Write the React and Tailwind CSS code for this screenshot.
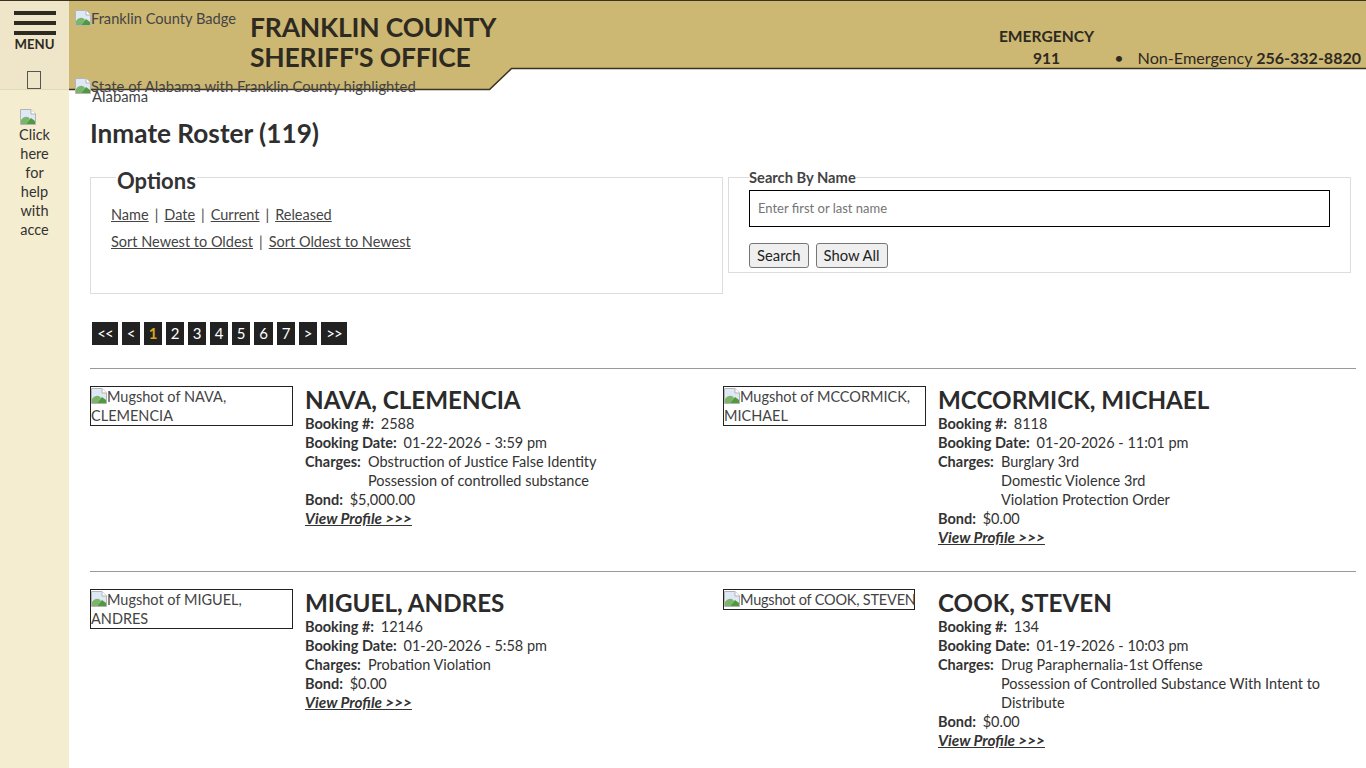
// Inmate Roster page
import { Fragment } from 'react'

const INMATES = [
  [
    { name: 'NAVA, CLEMENCIA', booking: '2588', date: '01-22-2026 - 3:59 pm', charges: ['Obstruction of Justice False Identity', 'Possession of controlled substance'], bond: '$5,000.00' },
    { name: 'MCCORMICK, MICHAEL', booking: '8118', date: '01-20-2026 - 11:01 pm', charges: ['Burglary 3rd', 'Domestic Violence 3rd', 'Violation Protection Order'], bond: '$0.00' },
  ],
  [
    { name: 'MIGUEL, ANDRES', booking: '12146', date: '01-20-2026 - 5:58 pm', charges: ['Probation Violation'], bond: '$0.00' },
    { name: 'COOK, STEVEN', booking: '134', date: '01-19-2026 - 10:03 pm', charges: ['Drug Paraphernalia-1st Offense', 'Possession of Controlled Substance With Intent to', 'Distribute'], bond: '$0.00', shortBox: true },
  ],
]

const PAGES = ['<<', '<', '1', '2', '3', '4', '5', '6', '7', '>', '>>']

function BrokenImage() {
  return (
    <svg width="16" height="16" viewBox="0 0 16 16" className="inline-block align-[-2px] shrink-0">
      <path d="M0.5 0.5H11L15.5 5V15.5H0.5Z" fill="#dfe8f5" stroke="#b4b4b4" />
      <path d="M11 0.5V5H15.5" fill="#fff" stroke="#b4b4b4" />
      <path d="M1 11C4 7 8 7 10 10L6 15H1Z" fill="#7cb469" />
      <path d="M6 15L11 9L15 12V15Z" fill="#4f9a3d" />
    </svg>
  )
}

function Header() {
  return (
    <header className="relative h-[90px] font-['Lato','Noto_Sans',sans-serif] text-[#2e2a22]">
      <svg className="absolute left-0 top-0 w-full h-[91px]" viewBox="0 0 1297 91" preserveAspectRatio="none">
        <path d="M0 0H1297V68.5H443L421 90H0Z" fill="#ccb773" />
        <path d="M0 0.5H1297" stroke="#3a3222" />
        <path d="M0 89.5H420.5L442.5 68.5H1297" stroke="#3a3222" strokeWidth="1.5" fill="none" />
      </svg>
      <div className="relative flex h-[68px] pl-[6px]">
        <div className="pt-[9px] w-[175px] text-[14.65px] leading-[19px] whitespace-nowrap text-[#444]">
          <BrokenImage />Franklin County Badge
        </div>
        <h2 className="pt-[12px] text-[26.5px] leading-[30px] font-bold whitespace-nowrap tracking-[-0.2px]">
          FRANKLIN COUNTY<br />SHERIFF'S OFFICE
        </h2>
        <div className="ml-auto flex items-end pr-[5px] -mb-[1px] text-[16.2px] leading-[22px] whitespace-nowrap">
          <div className="font-bold text-center text-[15.6px]">EMERGENCY<br />911</div>
          <span className="ml-[20px] mr-[14px]">•</span>
          <div>Non-Emergency <b className="text-[16px]">256-332-8820</b></div>
        </div>
      </div>
      <div className="absolute left-[6px] top-[77px] text-[14.85px] leading-[19px] whitespace-nowrap text-[#444]">
        <BrokenImage />State of Alabama with Franklin County highlighted
        <div className="pl-[17px] -mt-[9px]">Alabama</div>
      </div>
    </header>
  )
}

function Sidebar() {
  return (
    <aside className="w-[69px] shrink-0 bg-[#f5edcf] font-['Lato','Noto_Sans',sans-serif] text-[#333]">
      <div className="h-[90px] bg-[#efe6c9] border-b border-[#e3d9b8] border-t border-t-[#3a3222] flex flex-col items-center pt-[10px]">
        <div className="w-[42px] flex flex-col gap-[6px]">
          <div className="h-[4px] bg-[#2e2a22]" />
          <div className="h-[4px] bg-[#2e2a22]" />
          <div className="h-[4px] bg-[#2e2a22]" />
        </div>
        <div className="mt-[1px] text-[13.2px] leading-[17px] font-bold text-[#2e2a22]">MENU</div>
        <div className="mt-[18px] mr-[1px] w-[14px] h-[18px] shrink-0 border border-[#555]" />
      </div>
      <div className="mt-[18px] ml-[19px] w-[31px] overflow-hidden text-[14.5px] leading-[19px] text-center">
        <div className="text-left pl-[1px] h-[16px] mb-[1px]"><BrokenImage /></div>
        <div className="whitespace-nowrap">Click</div>
        <div>here</div>
        <div>for</div>
        <div>help</div>
        <div>with</div>
        <div className="whitespace-nowrap">acce</div>
      </div>
    </aside>
  )
}

function Options() {
  return (
    <div className="flex items-start gap-[5px] pr-[5px] text-[14.5px] leading-[19px] text-[#444]">
      <fieldset className="w-[633px] h-[131px] border border-[#ddd] px-[20px] pt-[14px]">
        <legend className="ml-[5px] px-[1px] text-[22px] leading-[28px] font-bold text-[#333]">
          <span className="block translate-y-[4px]">Options</span>
        </legend>
        <div>
          <a className="underline">Name</a><span className="mx-[6px]">|</span><a className="underline">Date</a><span className="mx-[6px]">|</span><a className="underline">Current</a><span className="mx-[6px]">|</span><a className="underline">Released</a>
        </div>
        <div className="mt-[8px]">
          <a className="underline">Sort Newest to Oldest</a><span className="mx-[6px]">|</span><a className="underline">Sort Oldest to Newest</a>
        </div>
      </fieldset>
      <fieldset className="mt-[14px] w-[623px] h-[96px] border border-[#ddd] px-[20px]">
        <legend className="text-[14.7px] leading-[0] font-bold text-[#444]">
          <span className="block -translate-y-[1px]">Search By Name</span>
        </legend>
        <input
          placeholder="Enter first or last name"
          className="block mt-[12px] w-[581px] h-[37px] border border-black px-[8px] pb-[2px] text-[13px] placeholder:text-[#757575] outline-none"
        />
        <div className="mt-[16px] flex gap-[7px]">
          <button className="h-[25px] px-[7px] bg-[#efefef] border border-[#767676] rounded-[3px] text-[14.8px] leading-[19px] text-[#222]">Search</button>
          <button className="h-[25px] px-[7px] bg-[#efefef] border border-[#767676] rounded-[3px] text-[14.8px] leading-[19px] text-[#222]">Show All</button>
        </div>
      </fieldset>
    </div>
  )
}

function Pager() {
  return (
    <div className="mt-[28px] ml-[2px] flex gap-[4px]">
      {PAGES.map((p) => (
        <span
          key={p}
          className={`h-[23px] bg-[#222] text-center text-[15px] leading-[23px] ${p.length === 2 ? 'w-[26px] tracking-[-1px]' : p === '6' ? 'w-[19px]' : 'w-[18px]'} ${p === '1' ? 'text-[#d9a520] font-bold' : 'text-white'}`}
        >
          {p}
        </span>
      ))}
    </div>
  )
}

function Label({ children }) {
  return <b className="font-bold mr-[3px]">{children}</b>
}

function Inmate({ inmate }) {
  return (
    <div className="flex items-start">
      <div className="w-[215px] shrink-0 text-[14.5px] leading-[19px] text-[#444]">
        <div className={`border border-[#222] ${inmate.shortBox ? 'w-[192px] whitespace-nowrap tracking-[-0.2px]' : 'w-[203px]'}`}>
          <BrokenImage />Mugshot of {inmate.name}
        </div>
      </div>
      <div className="-mt-[1px] text-[14.5px] leading-[19px] text-[#333]">
        <h3 className="text-[24.2px] leading-[29px] font-bold text-[#2b2b2b]">{inmate.name}</h3>
        <div><Label>Booking #:</Label> {inmate.booking}</div>
        <div><Label>Booking Date:</Label> {inmate.date}</div>
        <div className="flex">
          <b className="font-bold w-[63px] shrink-0">Charges:</b>
          <div>
            {inmate.charges.map((c) => <div key={c}>{c}</div>)}
          </div>
        </div>
        <div><Label>Bond:</Label> {inmate.bond}</div>
        <a className="font-bold italic underline text-[15.3px]">View Profile &gt;&gt;&gt;</a>
      </div>
    </div>
  )
}

export default function App() {
  return (
    <div className="flex h-[768px] overflow-hidden bg-white">
      <Sidebar />
      <div className="flex-1 min-w-0">
        <Header />
        <main className="pl-[21px] pr-[10px] font-['Lato','Noto_Sans',sans-serif]">
          <h1 className="pt-[28px] text-[26.2px] leading-[30px] font-bold text-[#2f2f2f]">Inmate Roster (119)</h1>
          <div className="mt-[15px]"><Options /></div>
          <Pager />
          {INMATES.map((row, i) => (
            <Fragment key={i}>
              <div className={`border-t border-[#999] ${i === 0 ? 'mt-[23px]' : ''}`} />
              <div className="grid grid-cols-2 pt-[17px] pb-[24px]">
                {row.map((inmate) => <Inmate key={inmate.name} inmate={inmate} />)}
              </div>
            </Fragment>
          ))}
        </main>
      </div>
    </div>
  )
}
